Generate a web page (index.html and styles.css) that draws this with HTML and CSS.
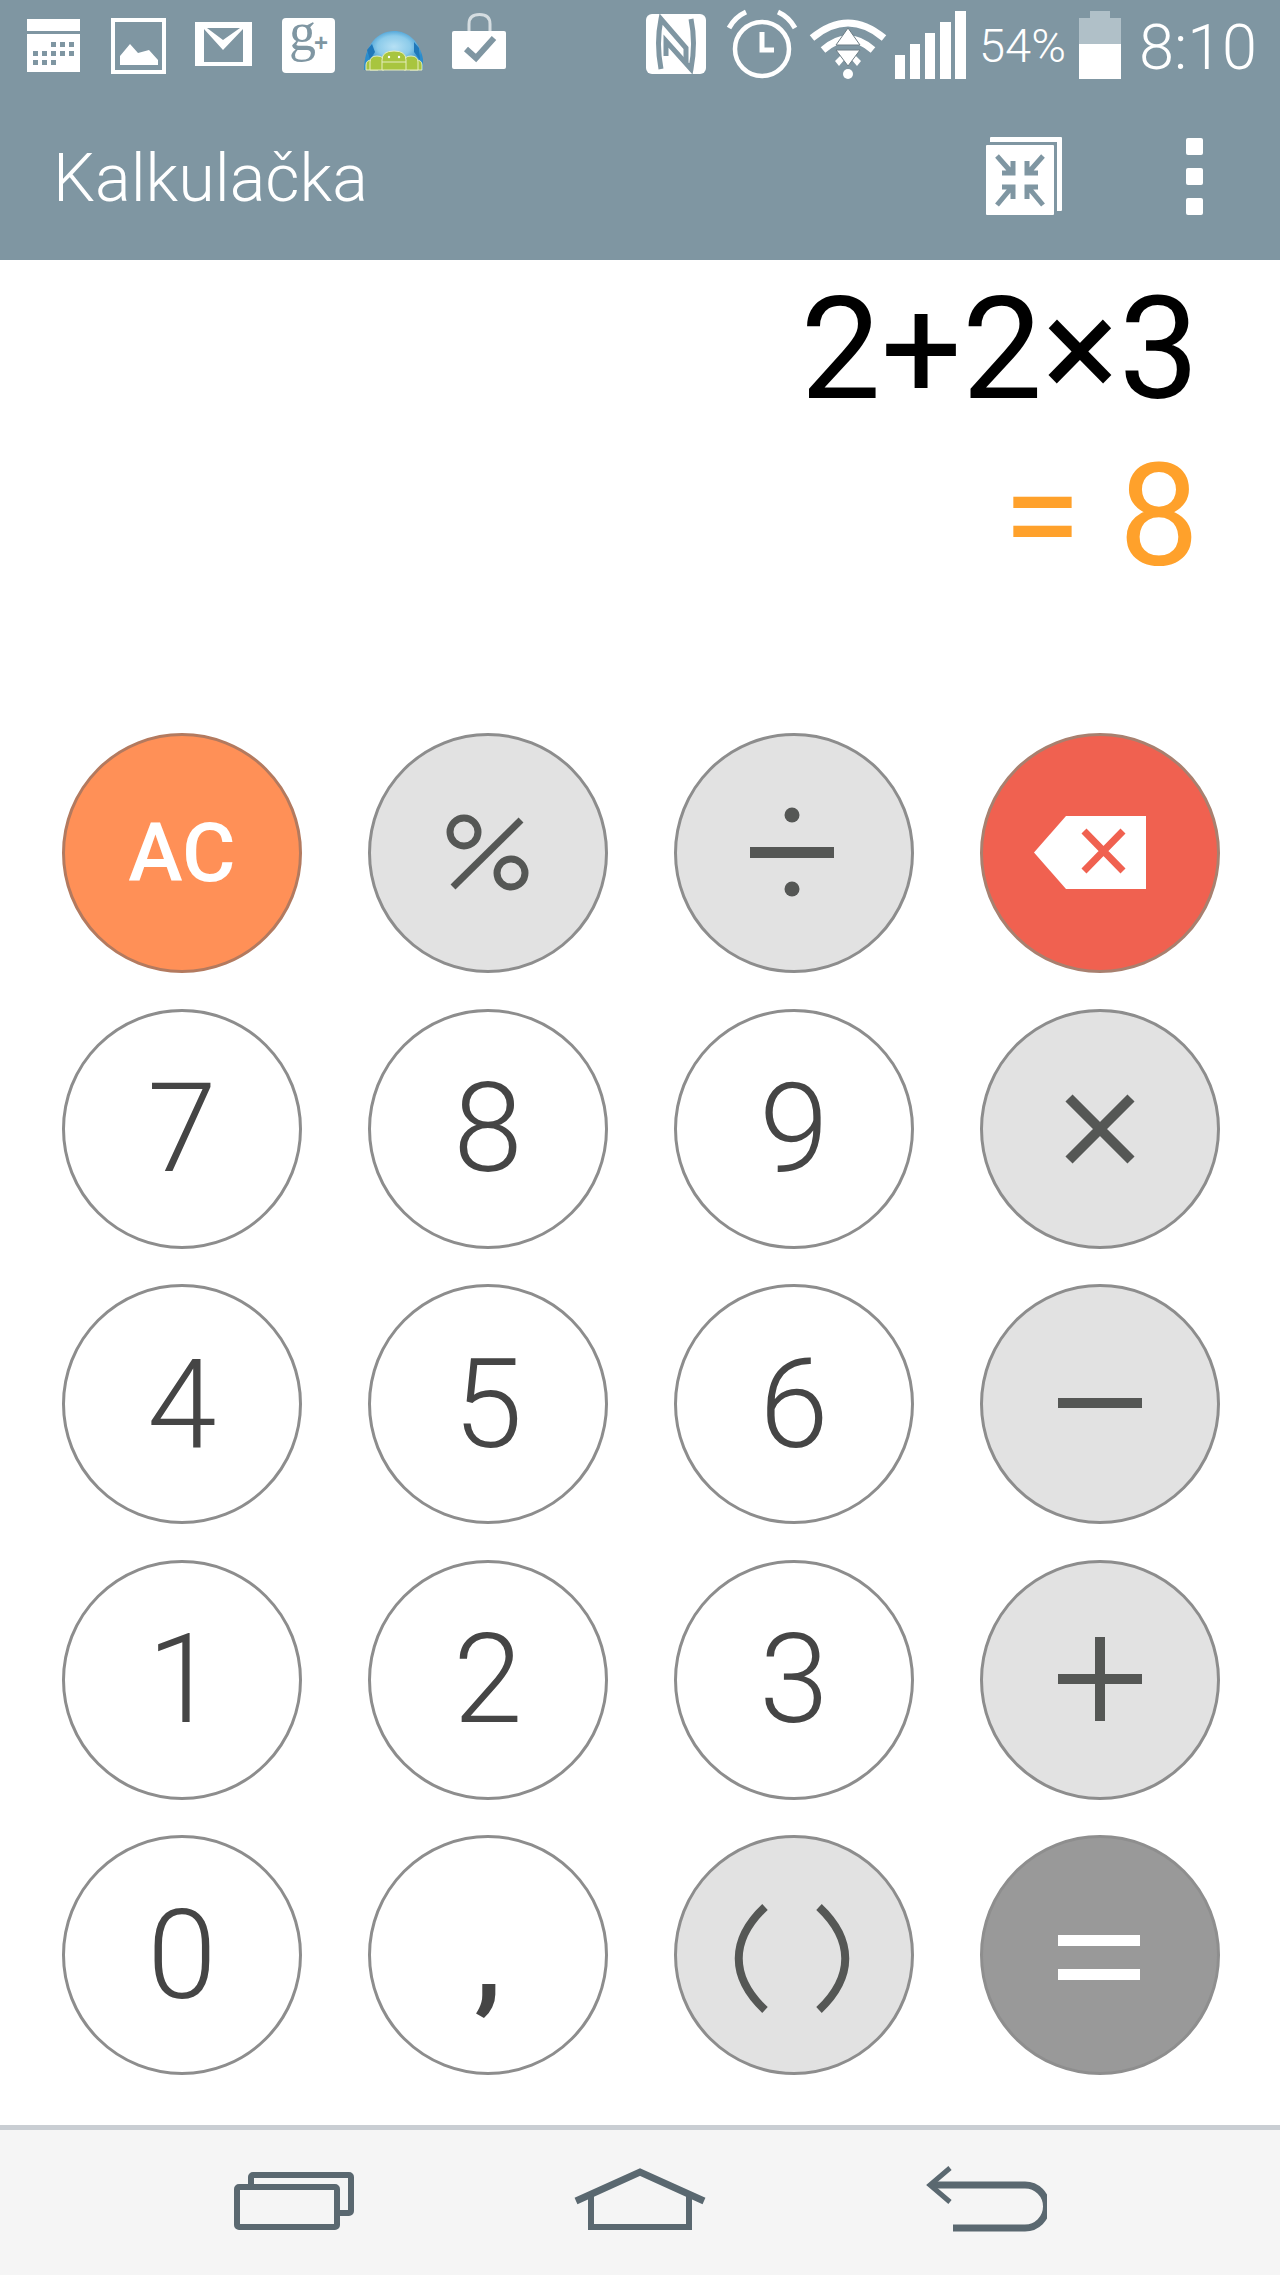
FILE: index.html
```html
<!DOCTYPE html>
<html lang="sk">
<head>
<meta charset="utf-8">
<title>Kalkulačka</title>
<link rel="stylesheet" href="styles.css">
</head>
<body>
<div class="phone">
  <header class="header">
    <div class="status">
      <div class="status-left">
        <svg class="ic w55" viewBox="0 0 55 92"><rect y="19" width="53" height="12" fill="#fff"/><rect y="34" width="53" height="38" fill="#fff"/><g fill="#7f96a2"><rect x="24" y="42" width="5" height="5"/><rect x="33" y="42" width="5" height="5"/><rect x="42" y="42" width="5" height="5"/><rect x="6" y="51" width="5" height="5"/><rect x="15" y="51" width="5" height="5"/><rect x="24" y="51" width="5" height="5"/><rect x="33" y="51" width="5" height="5"/><rect x="42" y="51" width="5" height="5"/><rect x="6" y="60" width="5" height="5"/><rect x="15" y="60" width="5" height="5"/><rect x="24" y="60" width="5" height="5"/></g></svg>
        <svg class="ic w55" viewBox="0 0 55 92"><rect x="2" y="20" width="51" height="52" fill="none" stroke="#fff" stroke-width="4"/><path d="M9 65V56L19 44L27 53L38 50L47 60V65Z" fill="#fff"/></svg>
        <svg class="ic w58" viewBox="0 0 58 92"><path fill="#fff" fill-rule="evenodd" d="M0 22H57V66H0ZM9 29V62H48V29L28 50ZM12 28L28 40L45 28Z"/></svg>
        <svg class="ic w53" viewBox="0 0 53 92"><rect y="18" width="53" height="55" rx="4" fill="#fff"/><text x="7" y="50" class="gplus-g">g</text><text x="32" y="51" class="gplus-p">+</text></svg>
        <svg class="ic w59" viewBox="0 0 59 92"><defs><radialGradient id="sky" cx="0.5" cy="0.4" r="0.5"><stop offset="0" stop-color="#b6e0f4"/><stop offset="0.55" stop-color="#8ccbea"/><stop offset="1" stop-color="#2a8ccc"/></radialGradient></defs><path d="M0 70C0 46 13 31 30 31C47 31 60 46 60 70Z" fill="url(#sky)"/><path d="M3 50L8 44L11 52L6 60ZM50 42L55 48L56 60L50 52Z" fill="#1f78ba"/><g fill="#a8c53f" stroke="#e6edc0" stroke-width="1"><path d="M2 70V65Q2 60 8 60Q14 60 14 65V70Z"/><path d="M46 70V65Q46 60 52 60Q58 60 58 65V70Z"/><path d="M6 70V62Q6 56 13 56Q20 56 20 62V70Z"/><path d="M40 70V62Q40 56 47 56Q54 56 54 62V70Z"/><path d="M18 70V60Q18 51 30 51Q42 51 42 60V70Z"/></g><circle cx="25" cy="57" r="1.200" fill="#fff"/><circle cx="35" cy="57" r="1.200" fill="#fff"/><path d="M18 62H42" stroke="#e6edc0" stroke-width="1"/></svg>
        <svg class="ic w54" viewBox="0 0 54 92"><path d="M17 31V24Q17 14.500 27.500 14.500Q38 14.500 38 24V31" fill="none" stroke="#d5dde1" stroke-width="3"/><rect y="31" width="54" height="38" rx="2" fill="#fff"/><path d="M14 49L24 58L42 38" fill="none" stroke="#7f96a2" stroke-width="6"/></svg>
      </div>
      <div class="status-right">
        <svg class="ic w72" viewBox="0 0 72 92"><rect y="14" width="60" height="60" rx="6" fill="#fff"/><g fill="none" stroke="#7f96a2" stroke-width="5"><path d="M15 69Q10 43 15 19L40 48V62"/><path d="M45 19Q50 43 45 69L20 41V56"/></g></svg>
        <svg class="ic w75" viewBox="0 0 75 92"><circle cx="36" cy="49" r="27" fill="none" stroke="#fff" stroke-width="4.500"/><path d="M36 32V50H48" fill="none" stroke="#fff" stroke-width="5"/><path d="M3 28Q9 17 20 12M69 28Q63 17 52 12" fill="none" stroke="#fff" stroke-width="5"/></svg>
        <svg class="ic w78" viewBox="0 0 78 92"><path d="M3 38Q39 8 75 38" fill="none" stroke="#fff" stroke-width="7"/><path d="M14 50Q39 28 64 50" fill="none" stroke="#fff" stroke-width="7"/><path d="M26 61L33 54L36 59L30 66ZM52 61L45 54L42 59L48 66Z" fill="#fff"/><circle cx="39" cy="74" r="5" fill="#fff"/><path d="M39 28L51 45H27ZM27 50H51L39 66Z" fill="#fff" stroke="#6d7d85" stroke-width="1"/></svg>
        <svg class="ic w78" viewBox="0 0 78 92"><path fill="#fff" d="M0 55H10V79H0ZM15 44H25V79H15ZM30 33H40V79H30ZM45 22H56V79H45ZM60 11H71V79H60Z"/></svg>
        <span class="pct">54%</span>
        <svg class="ic w54" viewBox="0 0 54 92"><path fill="#b0c0c8" d="M11 11H31V18H42V44H0V18H11Z"/><rect y="44" width="42" height="35" fill="#fff"/></svg>
        <span class="time">8:10</span>
      </div>
    </div>
    <div class="appbar">
      <h1 class="title">Kalkulačka</h1>
      <svg class="fold" viewBox="0 0 76 78"><rect x="4" width="72" height="74" rx="1" fill="#fff"/><rect x="0" y="5" width="71" height="73" fill="#7f96a2"/><rect y="8" width="68" height="70" rx="1" fill="#fff"/><g fill="none" stroke="#7f96a2" stroke-width="5"><path d="M11 19L26 36M27 24V36H16"/><path d="M57 19L42 36M41 24V36H52"/><path d="M11 68L26 50M27 62V50H16"/><path d="M57 68L42 50M41 62V50H52"/></g></svg>
      <div class="dots"><span class="dot"></span><span class="dot"></span><span class="dot"></span></div>
    </div>
  </header>

  <section class="display">
    <div class="expr">2+2×3</div>
    <div class="result"><span class="eq">=</span> 8</div>
  </section>

  <main class="keypad">
    <button class="key key-ac">AC</button>
    <button class="key key-op" aria-label="%"><svg class="glyph" viewBox="0 0 240 240"><g fill="none" stroke="#555755" stroke-width="7"><circle cx="96" cy="99" r="14"/><circle cx="143" cy="140" r="14"/><path d="M85 154L153 87"/></g></svg></button>
    <button class="key key-op" aria-label="÷"><svg class="glyph" viewBox="0 0 240 240"><rect x="76" y="114" width="84" height="11" fill="#555755"/><circle cx="118" cy="82" r="7.500" fill="#555755"/><circle cx="118" cy="156" r="7.500" fill="#555755"/></svg></button>
    <button class="key key-del" aria-label="⌫"><svg class="glyph" viewBox="0 0 240 240"><path d="M86 83H166V156H86L54 119.500Z" fill="#fff"/><path d="M104 98L143 138M143 98L104 138" fill="none" stroke="#f06150" stroke-width="7"/></svg></button>

    <button class="key">7</button>
    <button class="key">8</button>
    <button class="key">9</button>
    <button class="key key-op" aria-label="×"><svg class="glyph" viewBox="0 0 240 240"><path d="M89 89L151 151M151 89L89 151" fill="none" stroke="#555755" stroke-width="10"/></svg></button>

    <button class="key">4</button>
    <button class="key">5</button>
    <button class="key">6</button>
    <button class="key key-op" aria-label="−"><svg class="glyph" viewBox="0 0 240 240"><rect x="78" y="114" width="84" height="10" fill="#555755"/></svg></button>

    <button class="key">1</button>
    <button class="key">2</button>
    <button class="key">3</button>
    <button class="key key-op" aria-label="+"><svg class="glyph" viewBox="0 0 240 240"><path d="M78 119H162M120 77V161" fill="none" stroke="#555755" stroke-width="10"/></svg></button>

    <button class="key">0</button>
    <button class="key key-comma">,</button>
    <button class="key key-op" aria-label="( )"><svg class="glyph" viewBox="0 0 240 240"><path d="M91 72C56 105 56 142 91 175M145 72C180 105 180 142 145 175" fill="none" stroke="#555755" stroke-width="8"/></svg></button>
    <button class="key key-eq" aria-label="="><svg class="glyph" viewBox="0 0 240 240"><rect x="78" y="100" width="82" height="11" fill="#fff"/><rect x="78" y="134" width="82" height="11" fill="#fff"/></svg></button>
  </main>

  <nav class="nav">
    <svg class="nav-ic w120" viewBox="0 0 120 70"><rect x="17" y="10" width="100" height="38" rx="2" fill="none" stroke="#5a6870" stroke-width="6"/><rect x="3" y="22" width="100" height="40" rx="2" fill="#f5f5f5" stroke="#5a6870" stroke-width="6"/></svg>
    <svg class="nav-ic w134" viewBox="0 0 134 70"><path d="M3 36L67 7L131 36" fill="none" stroke="#5a6870" stroke-width="7"/><path d="M18 28V62H116V28" fill="none" stroke="#5a6870" stroke-width="6"/></svg>
    <svg class="nav-ic w122" viewBox="0 0 122 70"><path d="M6 20H100A21.500 21.500 0 0 1 100 63H28" fill="none" stroke="#5a6870" stroke-width="7"/><path d="M25 3L5 20L25 37" fill="none" stroke="#5a6870" stroke-width="5"/></svg>
  </nav>
</div>
</body>
</html>
```
FILE: styles.css
```css
* { box-sizing: border-box; }
html, body { margin: 0; padding: 0; background: #fff; }
body { font-family: Roboto, "Liberation Sans", sans-serif; }

.phone { width: 1280px; height: 2275px; display: flex; flex-direction: column; background: #fff; overflow: hidden; }

.header { height: 260px; background: #7f96a2; color: #fff; flex: none; }
.status { height: 92px; display: flex; justify-content: space-between; }
.status-left { display: flex; gap: 29px; padding-left: 27px; }
.status-right { display: flex; gap: 8px; padding-right: 27px; }
.ic { height: 92px; display: block; flex: none; }
.w53 { width: 53px; } .w54 { width: 54px; } .w55 { width: 55px; } .w58 { width: 58px; } .w59 { width: 59px; }
.w72 { width: 72px; } .w75 { width: 75px; } .w78 { width: 78px; }
.gplus-g { font: 400 54px "Liberation Serif", serif; fill: #7f96a2; }
.gplus-p { font: 700 24px "Liberation Sans", sans-serif; fill: #7f96a2; }
.pct { width: 90px; margin-left: -2px; margin-right: 2px; font-size: 47px; font-weight: 300; line-height: 92px; white-space: nowrap; }
.time { width: 114px; margin-left: -2px; font-size: 63px; font-weight: 300; line-height: 92px; padding-top: 2px; white-space: nowrap; }

.appbar { height: 168px; display: flex; align-items: center; padding: 0 77px 0 53px; }
.title { margin: 0; font-size: 66.5px; font-weight: 300; line-height: 1; padding-top: 4px; }
.fold { width: 76px; height: 78px; margin-left: auto; flex: none; }
.dots { display: flex; flex-direction: column; gap: 13px; margin-left: 124px; }
.dot { width: 17px; height: 17px; background: #fff; border-radius: 2px; display: block; }

.display { height: 473px; flex: none; padding: 6px 81px 0 0; text-align: right; font-size: 143px; line-height: 167px; }
.expr { color: #000; }
.result { color: #ffa12b; word-spacing: 2px; }

.keypad { display: grid; grid-template-columns: repeat(4, 240px); grid-auto-rows: 240px; column-gap: 66px; row-gap: 35.6px; padding-left: 62px; flex: none; }
.key { width: 240px; height: 240px; padding: 0; border: 3px solid #8d8d8d; border-radius: 50%; background: #fff; color: #454545; font: 300 125px/1 Roboto, sans-serif; display: grid; place-items: center; position: relative; }
.key-op { background: #e2e2e2; }
.key-ac { background: #ff9057; border-color: #b37a5f; color: #fff; font-size: 82px; font-weight: 500; }
.key-comma { font-weight: 500; }
.key-del { background: #f06150; border-color: #a8806f; }
.key-eq { background: #999; border-color: #8e8e8e; }
.glyph { width: 240px; height: 240px; display: block; position: absolute; left: -3px; top: -3px; }

.nav { margin-top: auto; height: 150px; flex: none; background: #f5f5f5; border-top: 5px solid #c9ced3; display: flex; justify-content: space-between; padding: 35px 233px 0 234px; }
.nav-ic { height: 70px; display: block; }
.w120 { width: 120px; } .w134 { width: 134px; } .w122 { width: 122px; }
```
